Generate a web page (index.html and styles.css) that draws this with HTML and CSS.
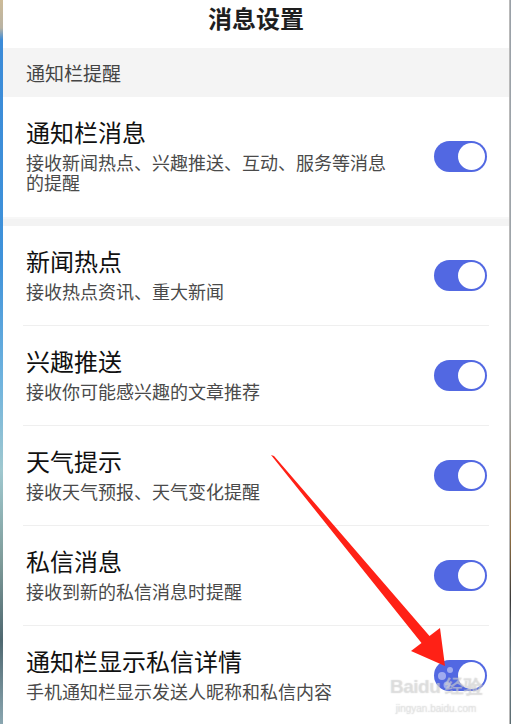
FILE: index.html
```html
<!DOCTYPE html>
<html>
<head>
  <title>消息设置</title>
  <meta charset=utf-8>
  <meta name="viewport" content="width=device-width, initial-scale=1" />
  <link rel="stylesheet" href="styles.css">
</head>
<body>

  <div id=frame>
    <div class="edge left"></div>

    <div id=page>
      <div id=title>消息设置</div>

      <div class="section">通知栏提醒</div>

      <div class="row first">
        <div class="text">
          <div class="name">通知栏消息</div>
          <div class="desc">接收新闻热点、兴趣推送、互动、服务等消息的提醒</div>
        </div>
        <div class="switch on"><span></span></div>
      </div>

      <div class="band"></div>

      <div class="row">
        <div class="text">
          <div class="name">新闻热点</div>
          <div class="desc">接收热点资讯、重大新闻</div>
        </div>
        <div class="switch on"><span></span></div>
      </div>
      <div class="row">
        <div class="text">
          <div class="name">兴趣推送</div>
          <div class="desc">接收你可能感兴趣的文章推荐</div>
        </div>
        <div class="switch on"><span></span></div>
      </div>
      <div class="row">
        <div class="text">
          <div class="name">天气提示</div>
          <div class="desc">接收天气预报、天气变化提醒</div>
        </div>
        <div class="switch on"><span></span></div>
      </div>
      <div class="row">
        <div class="text">
          <div class="name">私信消息</div>
          <div class="desc">接收到新的私信消息时提醒</div>
        </div>
        <div class="switch on"><span></span></div>
      </div>
      <div class="row last">
        <div class="text">
          <div class="name">通知栏显示私信详情</div>
          <div class="desc">手机通知栏显示发送人昵称和私信内容</div>
        </div>
        <div class="switch on"><span></span></div>
      </div>
    </div>

    <div class="edge right"></div>

    <!-- annotation arrow drawn over the screenshot -->
    <svg id=arrow width="511" height="724" viewBox="0 0 511 724">
      <polygon fill="#ff2116" points="271,455 274,456 429.5,636 440,628 445,666 411,651 421.5,643"/>
      <g fill="#fff" fill-opacity=".45">
        <circle cx="442" cy="676" r="4"/>
        <circle cx="447" cy="685" r="3.5"/>
        <circle cx="450" cy="670" r="3"/>
      </g>
    </svg>

    <div id=watermark>
      <div class="wm-logo">Baidu 经验</div>
      <div class="wm-url">jingyan.baidu.com</div>
    </div>
  </div>

</body>
</html>
```

FILE: styles.css
```css
* {
  box-sizing: border-box;
  font-family: "Noto Sans CJK SC", "Noto Sans", sans-serif;
}
html, body {
  margin: 0;
  padding: 0;
  background: #fff;
}
body {
  width: 511px;
  height: 724px;
  overflow: hidden;
}

#frame {
  position: relative;
  display: flex;
  height: 724px;
}
.edge {
  flex-shrink: 0;
}
.edge.left {
  width: 3px;
  background: linear-gradient(180deg, #cdbb98 0, #b9b3a3 28px, #3b8bd8 40px, #3f92da 260px, #6fb3de 380px, #9fc8cf 470px, #7f9c9a 560px, #4f6870 640px, #8aa6b0 724px);
}
.edge.right {
  width: 2px;
  background: linear-gradient(180deg, #9aa1a8 0, #a0a6aa 400px, #8a6a40 540px, #3a3a3a 600px, #6f8590 660px, #5b6b70 724px);
  border-left: 1px solid #b9b9b9;
}

#page {
  flex-grow: 1;
  display: flex;
  flex-direction: column;
  background: #fff;
  overflow: hidden;
}
#page > * {
  flex-shrink: 0;
}

#title {
  height: 48px;
  line-height: 36px;
  text-align: center;
  font-size: 24px;
  font-weight: bold;
  color: #1e1e1e;
}

.section {
  height: 49px;
  line-height: 49px;
  padding-left: 23px;
  background: #f4f4f4;
  color: #454545;
  font-size: 19px;
}

.band {
  height: 9px;
  background: #f3f3f3;
  border-top: 2px solid #f7f7f7;
}

.row {
  display: flex;
  align-items: center;
  margin: 0 20px;
  padding: 20px 2px 25px 3px;
  border-bottom: 1px solid #efefef;
  height: 100px;
}
.row.first {
  height: 120px;
  border-bottom: none;
}
.row.last {
  border-bottom: none;
}
.switch {
  margin-top: 4px;
}
.text {
  flex-grow: 1;
  align-self: flex-start;
}
.name {
  font-size: 24px;
  line-height: 30px;
  color: #111;
}
.desc {
  margin-top: 5px;
  font-size: 18px;
  line-height: 20px;
  color: #4a4a4a;
  max-width: 365px;
}

.switch {
  flex-shrink: 0;
  width: 53px;
  height: 31px;
  border-radius: 16px;
  background: #c9c9c9;
  padding: 2px;
  display: flex;
}
.switch.on {
  background: #5268e2;
  justify-content: flex-end;
}
.switch span {
  width: 27px;
  height: 27px;
  border-radius: 50%;
  background: #fff;
}

#arrow {
  position: absolute;
  top: 0;
  left: 0;
  pointer-events: none;
}

#watermark {
  position: absolute;
  left: 388px;
  top: 676px;
  width: 96px;
  text-align: center;
  color: rgba(255, 255, 255, .35);
  text-shadow: 0 0 1px rgba(150, 150, 150, .5);
  pointer-events: none;
}
.wm-logo {
  font-family: "Liberation Sans", sans-serif;
  font-size: 19px;
  font-weight: bold;
  line-height: 22px;
  white-space: nowrap;
  letter-spacing: -.5px;
}
.wm-url {
  font-family: "Liberation Sans", sans-serif;
  font-size: 10px;
  line-height: 12px;
  margin-top: 5px;
}
```
